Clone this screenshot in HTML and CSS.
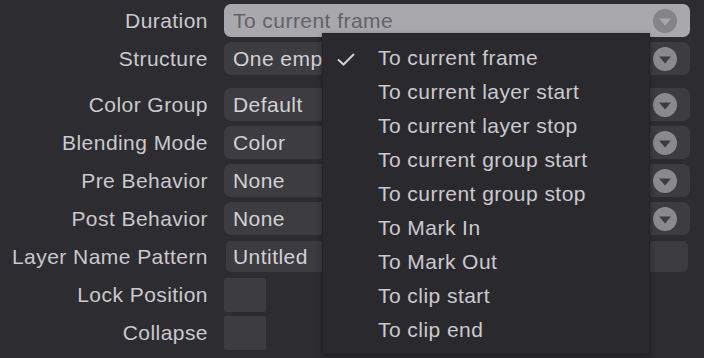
FILE: index.html
```html
<!DOCTYPE html>
<html>
<head>
<meta charset="utf-8">
<link rel="stylesheet" href="styles.css">
</head>
<body>
<div class="panel">
  <div class="row">
    <div class="label">Duration</div>
    <div class="select active"><span class="val">To current frame</span>
      <svg class="arrow" width="24" height="24" viewBox="0 0 24 24"><circle cx="12" cy="12" r="12" fill="#858489"/><path d="M6 9.5 H18 L12 16.5 Z" fill="#a9a8ad"/></svg>
    </div>
  </div>
  <div class="row">
    <div class="label">Structure</div>
    <div class="select"><span class="val">One empty layer</span>
      <svg class="arrow" width="24" height="24" viewBox="0 0 24 24"><circle cx="12" cy="12" r="12" fill="#8a898e"/><path d="M6 9.5 H18 L12 16.5 Z" fill="#3d3c41"/></svg>
    </div>
  </div>
  <div class="row gap">
    <div class="label">Color Group</div>
    <div class="select"><span class="val">Default</span>
      <svg class="arrow" width="24" height="24" viewBox="0 0 24 24"><circle cx="12" cy="12" r="12" fill="#8a898e"/><path d="M6 9.5 H18 L12 16.5 Z" fill="#3d3c41"/></svg>
    </div>
  </div>
  <div class="row">
    <div class="label">Blending Mode</div>
    <div class="select"><span class="val">Color</span>
      <svg class="arrow" width="24" height="24" viewBox="0 0 24 24"><circle cx="12" cy="12" r="12" fill="#8a898e"/><path d="M6 9.5 H18 L12 16.5 Z" fill="#3d3c41"/></svg>
    </div>
  </div>
  <div class="row">
    <div class="label">Pre Behavior</div>
    <div class="select"><span class="val">None</span>
      <svg class="arrow" width="24" height="24" viewBox="0 0 24 24"><circle cx="12" cy="12" r="12" fill="#8a898e"/><path d="M6 9.5 H18 L12 16.5 Z" fill="#3d3c41"/></svg>
    </div>
  </div>
  <div class="row">
    <div class="label">Post Behavior</div>
    <div class="select"><span class="val">None</span>
      <svg class="arrow" width="24" height="24" viewBox="0 0 24 24"><circle cx="12" cy="12" r="12" fill="#8a898e"/><path d="M6 9.5 H18 L12 16.5 Z" fill="#3d3c41"/></svg>
    </div>
  </div>
  <div class="row">
    <div class="label">Layer Name Pattern</div>
    <div class="input"><span class="val">Untitled</span></div>
  </div>
  <div class="row">
    <div class="label">Lock Position</div>
    <div class="check"></div>
  </div>
  <div class="row">
    <div class="label">Collapse</div>
    <div class="check"></div>
  </div>
</div>

<div class="menu">
  <div class="item"><svg class="tick" width="20" height="16" viewBox="0 0 20 16"><path d="M2 8.5 L7.5 13.5 L18 3" fill="none" stroke="#cfced2" stroke-width="2"/></svg>To current frame</div>
  <div class="item">To current layer start</div>
  <div class="item">To current layer stop</div>
  <div class="item">To current group start</div>
  <div class="item">To current group stop</div>
  <div class="item">To Mark In</div>
  <div class="item">To Mark Out</div>
  <div class="item">To clip start</div>
  <div class="item">To clip end</div>
</div>
</body>
</html>
```

FILE: styles.css
```css
html, body {
  margin: 0;
  padding: 0;
  background: #2d2c31;
  width: 704px;
  height: 358px;
  overflow: hidden;
  font-family: "Liberation Sans", Arial, sans-serif;
  font-size: 21px;
  letter-spacing: 0.45px;
}

.panel {
  display: flex;
  flex-direction: column;
  gap: 5px;
  padding-top: 4px;
}

.row {
  display: flex;
  align-items: center;
  height: 33px;
}

.row.gap {
  margin-top: 8px;
}

.label {
  width: 208px;
  flex: none;
  text-align: right;
  color: #cac9cd;
  padding-right: 16px;
  box-sizing: content-box;
  white-space: nowrap;
}

.select {
  width: 466px;
  height: 33px;
  box-sizing: border-box;
  background: #3d3c41;
  border-radius: 7px;
  display: flex;
  align-items: center;
  justify-content: space-between;
  padding: 0 13px 0 9px;
  color: #d2d1d5;
  white-space: nowrap;
  overflow: hidden;
}

.select.active {
  background: #a9a8ad;
  color: #636267;
}

.arrow {
  flex: none;
}

.input {
  width: 462px;
  height: 31px;
  margin-left: 2px;
  box-sizing: border-box;
  background: #3c3b40;
  border-radius: 5px;
  display: flex;
  align-items: center;
  padding-left: 7px;
  color: #d2d1d5;
}

.check {
  width: 42px;
  height: 34px;
  background: #3d3c41;
  border-radius: 2px;
}

.menu {
  position: absolute;
  left: 322px;
  top: 33px;
  width: 328px;
  height: 321px;
  box-sizing: border-box;
  background: #2a292e;
  border: 1px solid #252429;
  box-shadow: 0 2px 6px rgba(0, 0, 0, 0.35);
  padding-top: 7px;
}

.item {
  height: 34px;
  display: flex;
  align-items: center;
  padding-left: 55px;
  color: #cbcace;
  position: relative;
  white-space: nowrap;
}

.tick {
  position: absolute;
  left: 13px;
  top: 10px;
}
```
